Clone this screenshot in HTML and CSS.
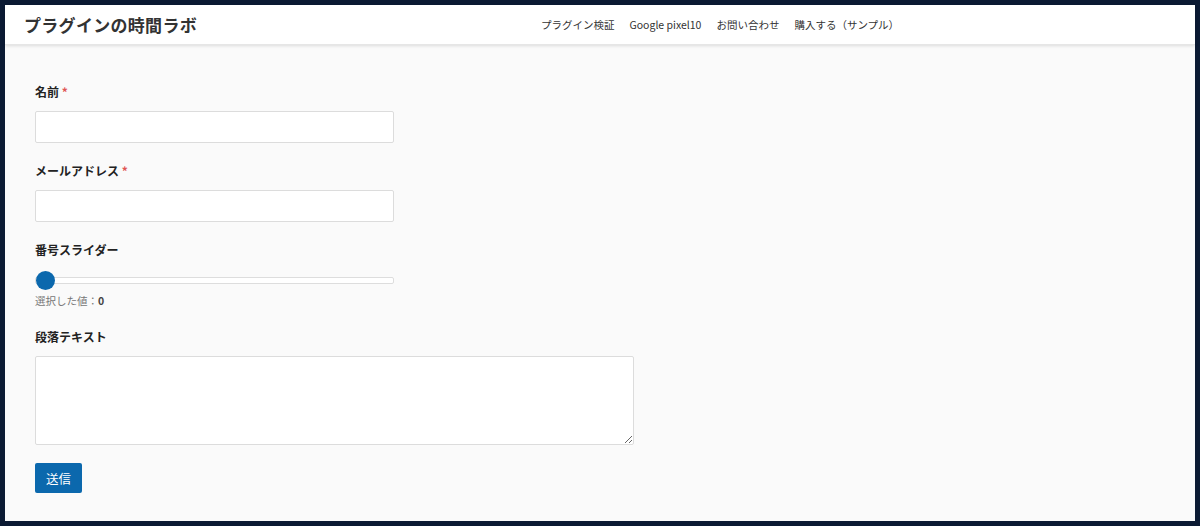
FILE: index.html
```html
<!DOCTYPE html>
<html lang="ja">
<head>
<meta charset="utf-8">
<title>プラグインの時間ラボ</title>
<link rel="stylesheet" href="styles.css">
</head>
<body>
<div class="frame">
  <header class="site-header">
    <div class="logo">プラグインの時間ラボ</div>
    <nav class="nav">
      <a href="#">プラグイン検証</a>
      <a href="#">Google pixel10</a>
      <a href="#">お問い合わせ</a>
      <a href="#">購入する（サンプル）</a>
    </nav>
  </header>
  <main class="content">
    <form class="form">
      <div class="field">
        <label class="label">名前 <span class="req">*</span></label>
        <input class="text-input" type="text">
      </div>
      <div class="field">
        <label class="label">メールアドレス <span class="req">*</span></label>
        <input class="text-input" type="email">
      </div>
      <div class="field slider-field">
        <label class="label">番号スライダー</label>
        <input class="range" type="range" min="0" max="100" value="0">
        <div class="value-text">選択した値：<b>0</b></div>
      </div>
      <div class="field">
        <label class="label">段落テキスト</label>
        <textarea class="textarea"></textarea>
      </div>
      <div class="actions">
        <button type="button" class="submit">送信</button>
      </div>
    </form>
  </main>
</div>
</body>
</html>
```
FILE: styles.css
```css
* { box-sizing: border-box; }
html, body { margin: 0; padding: 0; }
body {
  background: #0b1a33;
  padding: 5px;
  height: 526px;
  overflow: hidden;
  font-family: "Noto Sans CJK JP", "Noto Sans", sans-serif;
  color: #222;
}
.frame {
  background: #fafafa;
  height: 516px;
  display: flex;
  flex-direction: column;
}
.site-header {
  height: 40px;
  background: #fff;
  display: flex;
  align-items: center;
  padding-left: 19px;
  box-shadow: 0 1px 3px rgba(0,0,0,0.12);
  border-bottom: 1px solid #e6e6e6;
  position: relative;
}
.logo {
  font-size: 17px;
  font-weight: 700;
  color: #333;
  letter-spacing: 0.3px;
  width: 517px;
}
.nav {
  display: flex;
  gap: 15px;
}
.nav a {
  font-size: 10.5px;
  color: #333;
  text-decoration: none;
}
.content {
  padding: 38px 30px 0 30px;
}
.form {
  display: flex;
  flex-direction: column;
  gap: 19px;
}
.field {
  display: flex;
  flex-direction: column;
  gap: 10px;
}
.label {
  font-size: 12px;
  font-weight: 700;
  line-height: 18px;
  color: #222;
}
.req { color: #e05555; font-weight: 700; }
.text-input {
  width: 359px;
  height: 32px;
  border: 1px solid #dcdcdc;
  border-radius: 2px;
  background: #fff;
}
.slider-field { gap: 0; }
.range {
  -webkit-appearance: none;
  appearance: none;
  width: 359px;
  height: 18px;
  margin: 12px 0 0 0;
  background: transparent;
}
.range::-webkit-slider-runnable-track {
  height: 7px;
  background: #fff;
  border: 1px solid #dddddd;
  border-radius: 2px;
}
.range::-webkit-slider-thumb {
  -webkit-appearance: none;
  width: 19px;
  height: 19px;
  border-radius: 50%;
  background: #0b68ad;
  margin-top: -7px;
  border: none;
}
.value-text {
  margin-top: 4px;
  font-size: 10.5px;
  line-height: 16px;
  color: #777;
}
.value-text b { color: #444; font-weight: 700; }
.textarea {
  width: 599px;
  height: 89px;
  border: 1px solid #dcdcdc;
  border-radius: 2px;
  background: #fff;
  resize: both;
}
.actions { margin-top: -1px; }
.submit {
  width: 47px;
  height: 30px;
  background: #0b68ad;
  color: #fff;
  border: none;
  border-radius: 2px;
  font-family: "Noto Sans CJK JP", sans-serif;
  font-size: 12.5px;
  padding: 0;
}
```
